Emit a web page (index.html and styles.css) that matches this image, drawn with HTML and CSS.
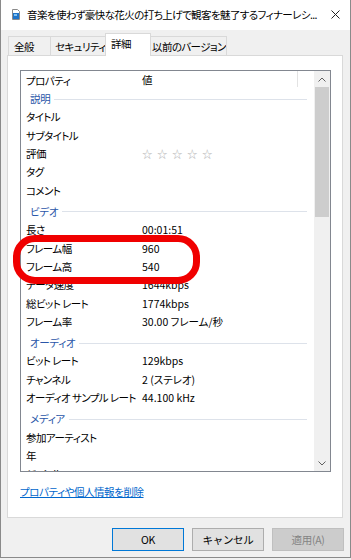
FILE: index.html
```html
<!DOCTYPE html>
<html lang="ja">
<head>
  <meta charset="UTF-8">
  <meta name="viewport" content="width=device-width, initial-scale=1.0">
  <title>プロパティ</title>
  <link rel="stylesheet" href="styles.css">
</head>
<body>

  <div class="window">
    <div class="titlebar">
      <svg class="file-icon" width="8" height="11" viewBox="0 0 8 11">
        <path d="M0.5 0.5H5.5L7.5 2.5V10.5H0.5Z" fill="#fff" stroke="#8a8a8a"/>
        <rect x="1" y="4" width="6" height="6" fill="#1e73c8"/>
        <rect x="2" y="5" width="3" height="2" fill="#7fc0f0"/>
      </svg>
      <span class="title-text">音楽を使わず豪快な花火の打ち上げで観客を魅了するフィナーレシ...</span>
      <svg class="close-icon" width="9" height="9" viewBox="0 0 9 9">
        <path d="M0.5 0.5L8.5 8.5M8.5 0.5L0.5 8.5" stroke="#222" stroke-width="1"/>
      </svg>
    </div>

    <div class="tabs">
      <div class="tab tab-general">全般</div>
      <div class="tab tab-security">セキュリティ</div>
      <div class="tab tab-details active">詳細</div>
      <div class="tab tab-previous">以前のバージョン</div>
    </div>

    <div class="tab-page">
      <div class="listbox">
        <div class="list">
          <div class="list-header">
            <div class="col-name">プロパティ</div>
            <div class="col-value">値</div>
          </div>

          <div class="group"><span>説明</span></div>
          <div class="row"><div class="name">タイトル</div><div class="value"></div></div>
          <div class="row"><div class="name">サブタイトル</div><div class="value"></div></div>
          <div class="row">
            <div class="name">評価</div>
            <div class="value stars"><span>☆</span><span>☆</span><span>☆</span><span>☆</span><span>☆</span></div>
          </div>
          <div class="row"><div class="name">タグ</div><div class="value"></div></div>
          <div class="row"><div class="name">コメント</div><div class="value"></div></div>

          <div class="group"><span>ビデオ</span></div>
          <div class="row"><div class="name">長さ</div><div class="value">00:01:51</div></div>
          <div class="row"><div class="name">フレーム幅</div><div class="value">960</div></div>
          <div class="row"><div class="name">フレーム高</div><div class="value">540</div></div>
          <div class="row"><div class="name">データ速度</div><div class="value">1644kbps</div></div>
          <div class="row"><div class="name">総ビット レート</div><div class="value">1774kbps</div></div>
          <div class="row"><div class="name">フレーム率</div><div class="value">30.00 フレーム/秒</div></div>

          <div class="group"><span>オーディオ</span></div>
          <div class="row"><div class="name">ビット レート</div><div class="value">129kbps</div></div>
          <div class="row"><div class="name">チャンネル</div><div class="value">2 (ステレオ)</div></div>
          <div class="row"><div class="name">オーディオ サンプル レート</div><div class="value">44.100 kHz</div></div>

          <div class="group"><span>メディア</span></div>
          <div class="row"><div class="name">参加アーティスト</div><div class="value"></div></div>
          <div class="row"><div class="name">年</div><div class="value"></div></div>
          <div class="row"><div class="name">ジャンル</div><div class="value"></div></div>
        </div>

        <div class="scrollbar">
          <div class="sb-button">
            <svg width="8" height="5" viewBox="0 0 8 5"><path d="M0.5 4.5L4 1L7.5 4.5" fill="none" stroke="#606060"/></svg>
          </div>
          <div class="sb-track"><div class="sb-thumb"></div></div>
          <div class="sb-button">
            <svg width="8" height="5" viewBox="0 0 8 5"><path d="M0.5 0.5L4 4L7.5 0.5" fill="none" stroke="#606060"/></svg>
          </div>
        </div>
      </div>

      <a class="remove-link" href="#">プロパティや個人情報を削除</a>
    </div>

    <div class="buttons">
      <button class="btn btn-default">OK</button>
      <button class="btn">キャンセル</button>
      <button class="btn" disabled>適用(A)</button>
    </div>

    <!-- 赤い囲み (注釈) -->
    <div class="highlight"></div>
  </div>

</body>
</html>
```

FILE: styles.css
```css
:root {
  --fundo: #f0f0f0;
  --borda-aba: #d9d9d9;
  --texto: #000;
  --grupo: #2a56a8;
  --link: #0066cc;
  --destaque: #f00000;
}

body {
  margin: 0;
  background-color: var(--fundo);
  color: var(--texto);
  font-family: "Noto Sans CJK JP", "Noto Sans", sans-serif;
  font-size: 10.5px;
  font-feature-settings: "palt";
}

.window {
  position: relative;
  width: 351px;
  height: 558px;
  box-sizing: border-box;
  border: 1px solid #8a8a8a;
  border-top: none;
  background-color: var(--fundo);
  display: flex;
  flex-direction: column;
}

/* barra de título */
.titlebar {
  height: 30px;
  flex-shrink: 0;
  background-color: #fff;
  display: flex;
  align-items: center;
  padding: 0 10px 2px 11px;
  box-sizing: border-box;
}

.file-icon {
  flex-shrink: 0;
  margin-right: 7px;
}

.title-text {
  white-space: nowrap;
  letter-spacing: -0.6px;
}

.close-icon {
  margin-left: auto;
  flex-shrink: 0;
}

/* abas */
.tabs {
  height: 25px;
  flex-shrink: 0;
  display: flex;
  align-items: flex-end;
  padding-left: 7px;
}

.tab {
  height: 19px;
  box-sizing: border-box;
  border: 1px solid var(--borda-aba);
  border-bottom: none;
  margin-right: -1px;
  line-height: 19px;
  white-space: nowrap;
  overflow: hidden;
  letter-spacing: -0.6px;
}

.tab-general {
  width: 43px;
  padding-left: 5px;
}

.tab-security {
  width: 58px;
  padding-left: 4px;
}

.tab-details {
  width: 46px;
  padding-left: 5px;
}

.tab-previous {
  width: 77px;
  padding-left: 1px;
}

.tab.active {
  position: relative;
  z-index: 1;
  height: 23px;
  margin: 0 -1px -1px -2px;
  background-color: #fff;
}

.tab-page {
  margin: 0 7px 0 6px;
  height: 463px;
  flex-shrink: 0;
  box-sizing: border-box;
  border: 1px solid var(--borda-aba);
  background-color: #fff;
  padding: 14px 0 0 12px;
}

/* lista de propriedades */
.listbox {
  width: 311px;
  height: 402px;
  box-sizing: border-box;
  border: 1px solid #828790;
  display: flex;
}

.list {
  flex: 1;
  overflow: hidden;
}

.list-header {
  height: 16px;
  display: flex;
  align-items: center;
}

.col-name {
  width: 121px;
  box-sizing: border-box;
  padding-left: 5px;
  padding-top: 2px;
  letter-spacing: -0.5px;
}

.col-value {
  width: 156px;
  height: 16px;
  box-sizing: border-box;
  border-right: 1px solid #e3e3e3;
  padding-top: 1px;
  line-height: 16px;
}

.group {
  height: 21px;
  box-sizing: border-box;
  padding: 3px 0 0 9px;
  display: flex;
  align-items: center;
  color: var(--grupo);
  line-height: 18px;
  letter-spacing: -0.3px;
}

.group::after {
  content: "";
  flex: 1;
  height: 1px;
  background-color: #dde2ea;
  margin: 0 7px 0 4px;
}

.row {
  height: 18.4px;
  display: flex;
  align-items: center;
  line-height: 18px;
  white-space: nowrap;
}

.name {
  width: 121px;
  flex-shrink: 0;
  box-sizing: border-box;
  padding-left: 5px;
  letter-spacing: -0.55px;
}

.stars {
  color: #b8b8b8;
  display: flex;
}

.stars span {
  margin-right: 4.5px;
}

/* barra de rolagem */
.scrollbar {
  width: 16px;
  flex-shrink: 0;
  background-color: var(--fundo);
  display: flex;
  flex-direction: column;
}

.sb-button {
  height: 16px;
  display: flex;
  align-items: center;
  justify-content: center;
}

.sb-track {
  flex: 1;
}

.sb-thumb {
  height: 130px;
  margin: 0 1px;
  background-color: #cdcdcd;
}

.remove-link {
  display: inline-block;
  margin-top: 13px;
  line-height: 14px;
  color: var(--link);
  text-decoration: underline;
  letter-spacing: -0.45px;
}

/* botões */
.buttons {
  display: flex;
  justify-content: flex-end;
  gap: 8px;
  padding: 10px 6px 0 0;
}

.btn {
  width: 72px;
  height: 23px;
  box-sizing: border-box;
  border: 1px solid #adadad;
  background-color: #e1e1e1;
  font-family: inherit;
  font-size: 10.5px;
  color: var(--texto);
  padding: 0;
  letter-spacing: -0.3px;
}

.btn-default {
  border-color: #0078d7;
}

.btn:disabled {
  background-color: #cccccc;
  border-color: #bfbfbf;
  color: #838383;
}

/* anotação vermelha sobre a captura */
.highlight {
  position: absolute;
  left: 12px;
  top: 235px;
  width: 187px;
  height: 49px;
  box-sizing: border-box;
  border: 7px solid var(--destaque);
  border-radius: 22px;
}
```
